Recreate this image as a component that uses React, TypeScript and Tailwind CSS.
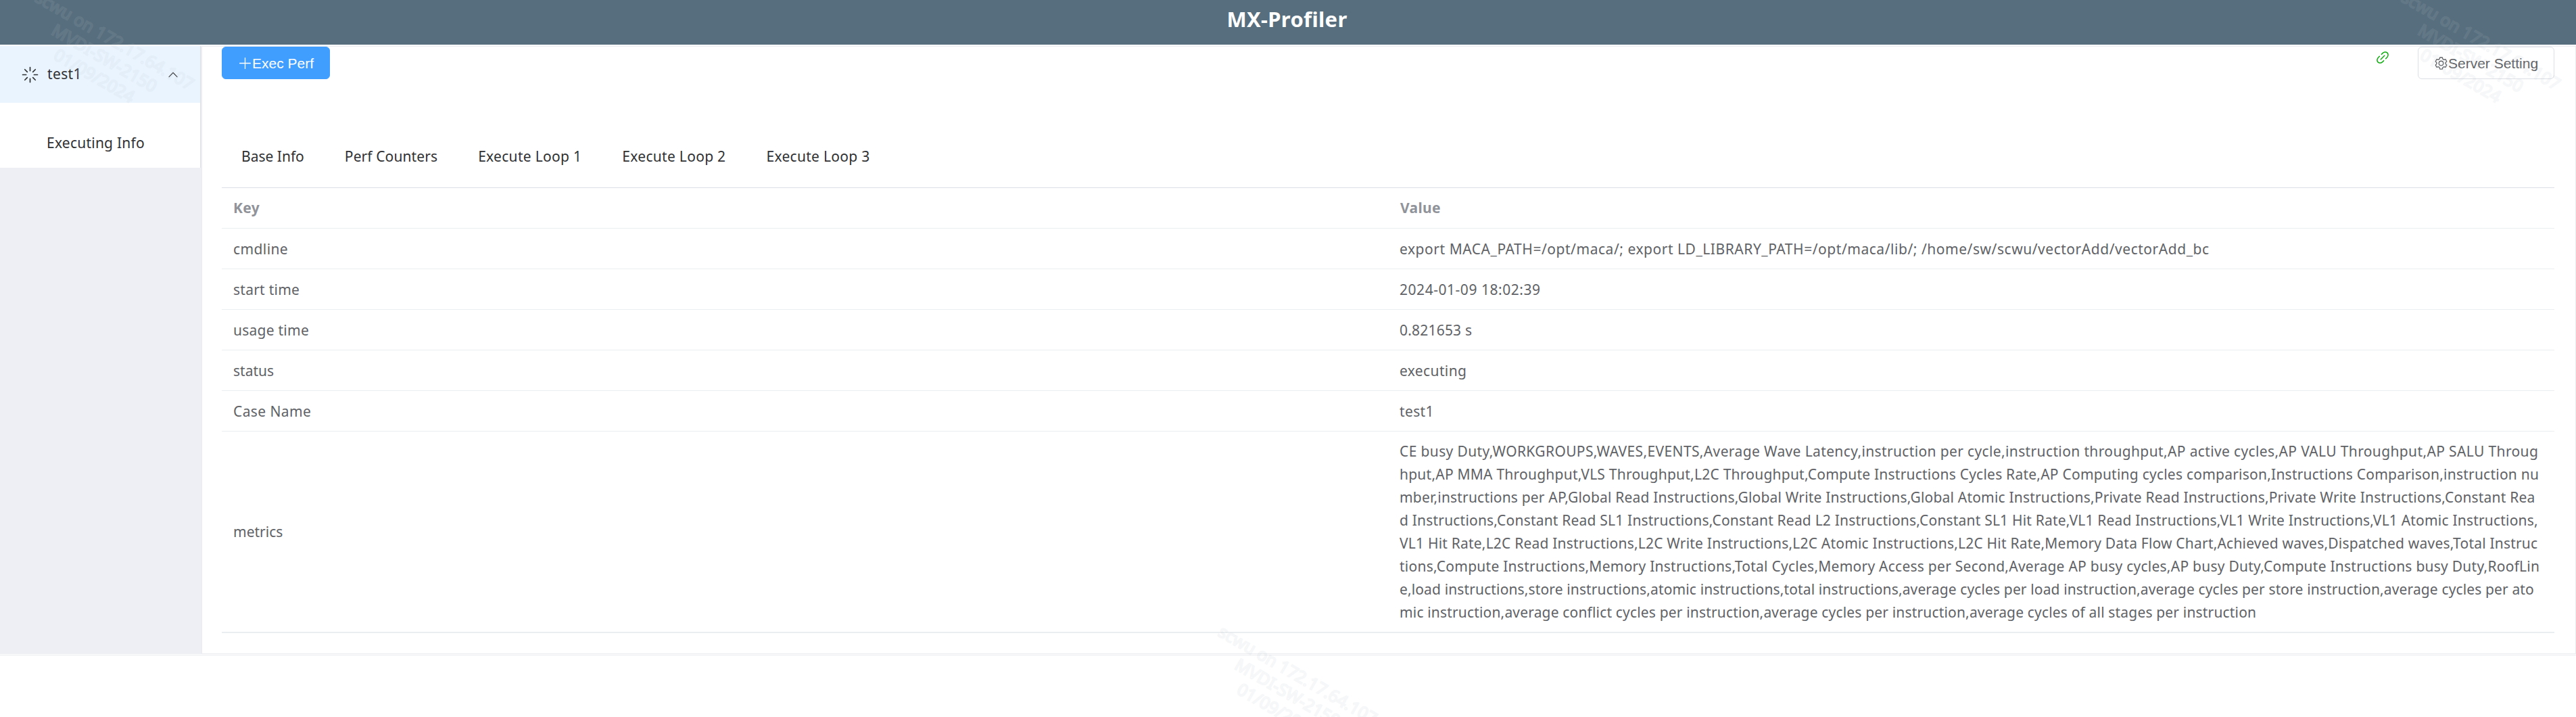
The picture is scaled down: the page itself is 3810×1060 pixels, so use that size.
import { ReactNode } from "react";

type Cell = { text: string; spacing?: string };
type Row = { name: Cell; value: Cell[]; tall?: boolean };

const tabs: Cell[] = [
  { text: "Base Info" },
  { text: "Perf Counters", spacing: "tracking-[0.1px]" },
  { text: "Execute Loop 1", spacing: "tracking-[0.3px]" },
  { text: "Execute Loop 2", spacing: "tracking-[0.3px]" },
  { text: "Execute Loop 3", spacing: "tracking-[0.3px]" },
];

const rows: Row[] = [
  {
    name: { text: "cmdline", spacing: "tracking-[0.4px]" },
    value: [{ text: "export MACA_PATH=/opt/maca/; export LD_LIBRARY_PATH=/opt/maca/lib/; /home/sw/scwu/vectorAdd/vectorAdd_bc", spacing: "tracking-[0.539px]" }],
  },
  {
    name: { text: "start time", spacing: "tracking-[0.25px]" },
    value: [{ text: "2024-01-09 18:02:39", spacing: "tracking-[0.534px]" }],
  },
  {
    name: { text: "usage time", spacing: "tracking-[0.25px]" },
    value: [{ text: "0.821653 s", spacing: "tracking-[0.203px]" }],
  },
  {
    name: { text: "status" },
    value: [{ text: "executing", spacing: "tracking-[0.376px]" }],
  },
  {
    name: { text: "Case Name", spacing: "tracking-[0.4px]" },
    value: [{ text: "test1", spacing: "tracking-[0.359px]" }],
  },
  {
    name: { text: "metrics" },
    tall: true,
    value: [
      { text: "CE busy Duty,WORKGROUPS,WAVES,EVENTS,Average Wave Latency,instruction per cycle,instruction throughput,AP active cycles,AP VALU Throughput,AP SALU Throug", spacing: "tracking-[0.369px]" },
      { text: "hput,AP MMA Throughput,VLS Throughput,L2C Throughput,Compute Instructions Cycles Rate,AP Computing cycles comparison,Instructions Comparison,instruction nu", spacing: "tracking-[0.232px]" },
      { text: "mber,instructions per AP,Global Read Instructions,Global Write Instructions,Global Atomic Instructions,Private Read Instructions,Private Write Instructions,Constant Rea", spacing: "tracking-[0.19px]" },
      { text: "d Instructions,Constant Read SL1 Instructions,Constant Read L2 Instructions,Constant SL1 Hit Rate,VL1 Read Instructions,VL1 Write Instructions,VL1 Atomic Instructions,", spacing: "tracking-[0.196px]" },
      { text: "VL1 Hit Rate,L2C Read Instructions,L2C Write Instructions,L2C Atomic Instructions,L2C Hit Rate,Memory Data Flow Chart,Achieved waves,Dispatched waves,Total Instruc", spacing: "tracking-[0.203px]" },
      { text: "tions,Compute Instructions,Memory Instructions,Total Cycles,Memory Access per Second,Average AP busy cycles,AP busy Duty,Compute Instructions busy Duty,RoofLin", spacing: "tracking-[0.252px]" },
      { text: "e,load instructions,store instructions,atomic instructions,total instructions,average cycles per load instruction,average cycles per store instruction,average cycles per ato", spacing: "tracking-[0.132px]" },
      { text: "mic instruction,average conflict cycles per instruction,average cycles per instruction,average cycles of all stages per instruction", spacing: "tracking-[0.172px]" },
    ],
  },
];

const icons = {
  loading:
    "M512 64a32 32 0 0 1 32 32v192a32 32 0 0 1-64 0V96a32 32 0 0 1 32-32zm0 640a32 32 0 0 1 32 32v192a32 32 0 1 1-64 0V736a32 32 0 0 1 32-32zm448-192a32 32 0 0 1-32 32H736a32 32 0 1 1 0-64h192a32 32 0 0 1 32 32zm-640 0a32 32 0 0 1-32 32H96a32 32 0 0 1 0-64h192a32 32 0 0 1 32 32zM195.2 195.2a32 32 0 0 1 45.248 0L376.32 331.008a32 32 0 0 1-45.248 45.248L195.2 240.448a32 32 0 0 1 0-45.248zm452.544 452.544a32 32 0 0 1 45.248 0L828.8 783.552a32 32 0 0 1-45.248 45.248L647.744 692.992a32 32 0 0 1 0-45.248zM828.8 195.264a32 32 0 0 1 0 45.184L692.992 376.32a32 32 0 0 1-45.248-45.248l135.808-135.808a32 32 0 0 1 45.248 0zm-452.544 452.48a32 32 0 0 1 0 45.248L240.448 828.8a32 32 0 0 1-45.248-45.248l135.808-135.808a32 32 0 0 1 45.248 0z",
  arrowUp:
    "m488.832 344.32-339.84 356.672a32 32 0 0 0 0 44.16l.384.384a29.44 29.44 0 0 0 42.688 0l320-335.872 319.872 335.872a29.44 29.44 0 0 0 42.688 0l.384-.384a32 32 0 0 0 0-44.16L535.168 344.32a32 32 0 0 0-46.336 0z",
  plus: "M480 480V128a32 32 0 0 1 64 0v352h352a32 32 0 1 1 0 64H544v352a32 32 0 1 1-64 0V544H128a32 32 0 0 1 0-64h352z",
  link: "M715.648 625.152 670.4 579.904l90.496-90.56c75.008-74.944 85.12-186.368 22.656-248.896-62.528-62.464-173.952-52.352-248.96 22.656L444.16 353.6l-45.248-45.248 90.496-90.496c100.032-99.968 251.968-110.08 339.456-22.656 87.488 87.488 77.312 239.424-22.656 339.456l-90.496 90.496zm-90.496 90.496-90.496 90.496C434.624 906.112 282.688 916.224 195.2 828.8c-87.488-87.488-77.312-239.424 22.656-339.456l90.496-90.496 45.248 45.248-90.496 90.56c-75.008 74.944-85.12 186.368-22.656 248.896 62.528 62.464 173.952 52.352 248.96-22.656l90.496-90.496zm0-362.048 45.248 45.248L398.848 670.4 353.6 625.152z",
  setting:
    "M600.704 64a32 32 0 0 1 30.464 22.208l35.2 109.376c14.784 7.232 28.928 15.36 42.432 24.512l112.384-24.192a32 32 0 0 1 34.432 15.36L944.32 364.8a32 32 0 0 1-4.032 37.504l-77.12 85.12a357.12 357.12 0 0 1 0 49.024l77.12 85.248a32 32 0 0 1 4.032 37.504l-88.704 153.6a32 32 0 0 1-34.432 15.296L708.8 803.904c-13.44 9.088-27.648 17.28-42.368 24.512l-35.264 109.376A32 32 0 0 1 600.704 960H423.296a32 32 0 0 1-30.464-22.208L357.696 828.48a351.616 351.616 0 0 1-42.56-24.64l-112.32 24.256a32 32 0 0 1-34.432-15.36L79.68 659.2a32 32 0 0 1 4.032-37.504l77.12-85.248a357.12 357.12 0 0 1 0-48.896l-77.12-85.248A32 32 0 0 1 79.68 364.8l88.704-153.6a32 32 0 0 1 34.432-15.296l112.32 24.256c13.568-9.152 27.776-17.408 42.56-24.64l35.2-109.312A32 32 0 0 1 423.232 64H600.64zm-23.424 64H446.72l-36.352 113.088-24.512 11.968a294.113 294.113 0 0 0-34.816 20.096l-22.656 15.36-116.224-25.088-65.28 113.152 79.68 88.192-1.92 27.136a293.12 293.12 0 0 0 0 40.192l1.92 27.136-79.808 88.192 65.344 113.152 116.224-25.024 22.656 15.296a294.113 294.113 0 0 0 34.816 20.096l24.512 11.968L446.72 896h130.688l36.48-113.152 24.448-11.904a288.282 288.282 0 0 0 34.752-20.096l22.592-15.296 116.288 25.024 65.28-113.152-79.744-88.192 1.92-27.136a293.12 293.12 0 0 0 0-40.256l-1.92-27.136 79.808-88.128-65.344-113.152-116.288 24.96-22.592-15.232a287.616 287.616 0 0 0-34.752-20.096l-24.448-11.904L577.344 128zM512 320a192 192 0 1 1 0 384 192 192 0 0 1 0-384zm0 64a128 128 0 1 0 0 256 128 128 0 0 0 0-256z",
};

function Icon({ name, className }: { name: keyof typeof icons; className: string }) {
  return (
    <svg viewBox="0 0 1024 1024" fill="currentColor" className={`shrink-0 ${className}`}>
      <path d={icons[name]} />
    </svg>
  );
}

function Button({ className, children }: { className: string; children: ReactNode }) {
  return (
    <button
      className={`flex h-12 items-center rounded-md border pl-[23px] font-['Liberation_Sans',Arial,sans-serif] text-[21px] leading-none whitespace-nowrap ${className}`}
    >
      {children}
    </button>
  );
}

function Sidebar() {
  return (
    <aside className="flex w-[298px] shrink-0 flex-col bg-[#eeeff5] text-[#303133]">
      <div className="mr-px border-r border-[#dcdfe6] bg-white">
        <div className="flex h-[84px] items-center bg-[#e9f4ff] pr-[31px] pl-[31px]">
          <Icon name="loading" className="h-[27px] w-[27px]" />
          <span className="ml-3 tracking-[0.359px]">test1</span>
          <Icon name="arrowUp" className="ml-auto h-[18px] w-[18px]" />
        </div>
        <div className="flex h-24 items-center pt-[23px] pl-[69px]">
          <span className="tracking-[0.235px]">Executing Info</span>
        </div>
      </div>
    </aside>
  );
}

function Table() {
  return (
    <div className="border-t border-[#dcdfe6] text-[#606266]">
      <div className="grid h-[60px] grid-cols-2 items-center border-b border-[#ebeef0] font-bold text-[#909399]">
        <span className="pl-[17px] tracking-[0.4px]">Key</span>
        <span className="pl-[18px] tracking-[0.32px]">Value</span>
      </div>
      {rows.map((row) => (
        <div
          key={row.name.text}
          className={`grid grid-cols-2 items-center border-[#ebeef0] leading-[34px] ${row.tall ? "h-[298px] border-b-2" : "h-[60px] border-b"}`}
        >
          <span className={`pl-[17px] ${row.name.spacing ?? ""}`}>{row.name.text}</span>
          <div className="pl-[17px]">
            {row.value.map((line) => (
              <p key={line.text} className={`whitespace-nowrap ${line.spacing ?? ""}`}>{line.text}</p>
            ))}
          </div>
        </div>
      ))}
    </div>
  );
}

function Watermark({ className }: { className: string }) {
  return (
    <div
      className={`pointer-events-none absolute h-[90px] w-[280px] rotate-30 text-center text-[25px] leading-[30px] whitespace-nowrap text-transparent [-webkit-text-stroke:2px_rgba(190,196,200,0.14)] ${className}`}
    >
      <p>scwu on 172.17.64.107</p>
      <p>MVDI-SW-2150</p>
      <p>01/09/2024</p>
    </div>
  );
}

export default function App() {
  return (
    <div className="relative h-[1060px] w-[3810px] overflow-hidden bg-white font-['Noto_Sans','Noto_Sans_CJK_SC',sans-serif] text-[21px]">
      <header className="h-[66px] bg-[#576e7e] pr-[3px] text-center text-[31px] leading-[56px] font-bold tracking-[0.32px] text-white">
        MX-Profiler
      </header>

      <div className="mt-0.5 flex h-[901px] border-b border-[#e9ebee] pb-px">
        <Sidebar />
        <main className="flex-1 border border-[#e9ebee] pr-[31px] pl-[29px]">
          <div className="flex h-12 items-start">
            <Button className="w-[160px] border-[#409eff] bg-[#409eff] text-white">
              <Icon name="plus" className="h-[21px] w-[21px]" />
              <span>Exec Perf</span>
            </Button>
            <Icon name="link" className="mt-1 ml-auto h-6 w-6 text-[#13ad13]" />
            <Button className="ml-10 w-[202px] border-[#dcdfe6] bg-white text-[#606266]">
              <Icon name="setting" className="h-[21px] w-[21px]" />
              <span>Server Setting</span>
            </Button>
          </div>

          <nav className="mt-[84px] flex h-[76px] gap-[60px] pl-[29px] leading-[60px] text-[#303133]">
            {tabs.map((tab) => (
              <span key={tab.text} className={tab.spacing}>{tab.text}</span>
            ))}
          </nav>

          <Table />
        </main>
      </div>

      <Watermark className="top-[40px] left-[15px]" />
      <Watermark className="top-[40px] left-[3515px]" />
      <Watermark className="top-[978px] left-[1765px]" />
    </div>
  );
}
